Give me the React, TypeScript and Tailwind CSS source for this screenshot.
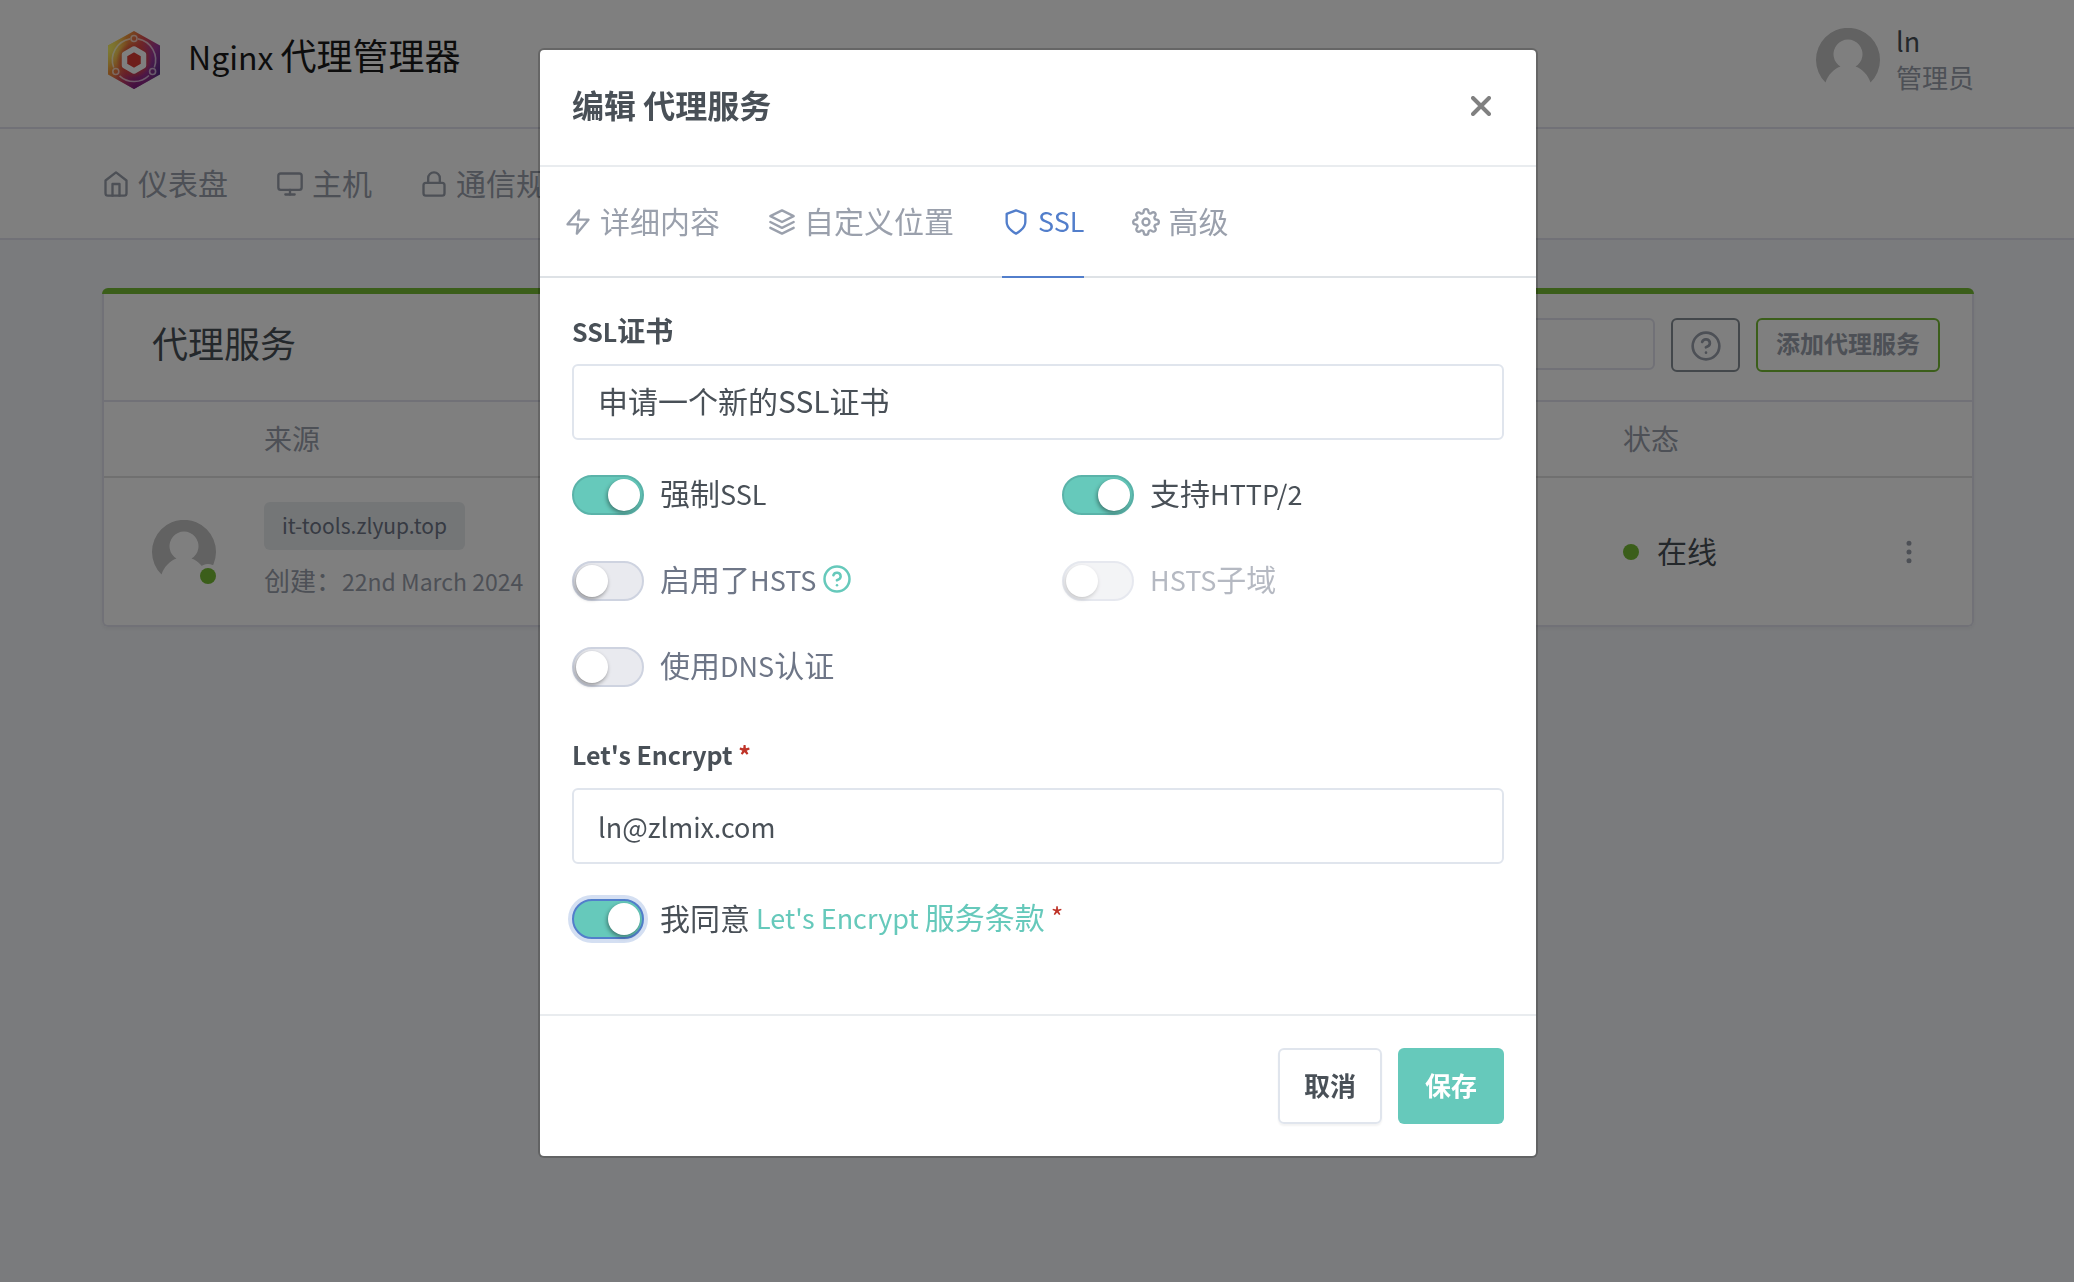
import React, { useState } from 'react';
import {
  FiHelpCircle,
  FiHome,
  FiLayers,
  FiLock,
  FiMonitor,
  FiMoreVertical,
  FiSettings,
  FiShield,
  FiZap,
} from 'react-icons/fi';
import { IconType } from 'react-icons';

const navItems: { label: string; icon: IconType }[] = [
  { label: '仪表盘', icon: FiHome },
  { label: '主机', icon: FiMonitor },
  { label: '通信规则', icon: FiLock },
];

// latin runs are set a step smaller than the chinese around them
const tabs: { id: string; label: React.ReactNode; icon: IconType }[] = [
  { id: 'details', label: '详细内容', icon: FiZap },
  { id: 'locations', label: '自定义位置', icon: FiLayers },
  { id: 'ssl', label: <span className="text-[27px]">SSL</span>, icon: FiShield },
  { id: 'advanced', label: '高级', icon: FiSettings },
];

const Logo = () => (
  <svg viewBox="0 0 52 58" className="h-[58px] w-[52px]" aria-hidden="true">
    <defs>
      <linearGradient id="hex" x1="0" y1="0.2" x2="1" y2="0.75">
        <stop offset="0" stopColor="#f5e04e" />
        <stop offset="0.25" stopColor="#f2923a" />
        <stop offset="0.5" stopColor="#dc4a50" />
        <stop offset="0.75" stopColor="#a0389c" />
        <stop offset="1" stopColor="#4f2a86" />
      </linearGradient>
      <radialGradient id="glow" cx="0" cy="0.3" r="0.4">
        <stop offset="0" stopColor="#fbf66a" />
        <stop offset="1" stopColor="#fbf66a" stopOpacity="0" />
      </radialGradient>
      <radialGradient id="core">
        <stop offset="0" stopColor="#e0402c" />
        <stop offset="0.6" stopColor="#dd4434" stopOpacity="0.8" />
        <stop offset="1" stopColor="#dd4434" stopOpacity="0" />
      </radialGradient>
      <radialGradient id="base" cx="0.55" cy="1" r="0.5">
        <stop offset="0" stopColor="#7a1c7e" />
        <stop offset="1" stopColor="#b02a7a" stopOpacity="0" />
      </radialGradient>
    </defs>
    <path d="M26 0 52 14.5v29L26 58 0 43.5v-29z" fill="url(#hex)" />
    <path d="M26 0 52 14.5v29L26 58 0 43.5v-29z" fill="url(#glow)" />
    <path d="M26 0 52 14.5v29L26 58 0 43.5v-29z" fill="url(#base)" />
    <circle cx="26" cy="29" r="18" fill="url(#core)" />
    <g fill="none" stroke="#fff" strokeOpacity="0.65" strokeWidth="1.6">
      <path d="M30 7.9A21.5 21.5 0 0 1 46.3 36.5" />
      <path d="M41 44.5A21.5 21.5 0 0 1 11.5 44.8" />
      <path d="M5.7 36.5A21.5 21.5 0 0 1 22 7.9" />
      <circle cx="26" cy="7.5" r="3" />
      <circle cx="7.8" cy="40.5" r="3" />
      <circle cx="44.6" cy="40.5" r="3" />
    </g>
    <path
      d="M26 18 35.5 23.5v11L26 40l-9.5-5.5v-11z"
      fill="#dc3c34"
      stroke="#fff"
      strokeWidth="5.5"
      strokeLinejoin="round"
    />
  </svg>
);

const Avatar = () => (
  <svg viewBox="0 0 64 64" className="size-16 shrink-0" role="img" aria-label="头像">
    <path
      d="M9.5 54.6A32 32 0 1 1 54.5 54.6C52 47 46.5 41 39.5 38.5A14.5 14.5 0 1 0 24.5 38.5C17.5 41 12 47 9.5 54.6z"
      fill="#c4c4c4"
    />
  </svg>
);

type ToggleProps = {
  id: string;
  label: React.ReactNode;
  defaultChecked?: boolean;
  disabled?: boolean;
  autoFocus?: boolean;
  children?: React.ReactNode;
};

const Toggle = ({ id, label, defaultChecked, disabled, autoFocus, children }: ToggleProps) => {
  const [checked, setChecked] = useState(!!defaultChecked);

  return (
    <div className={`flex h-[46px] items-center gap-4 ${disabled ? 'opacity-50' : ''}`}>
      <input
        id={id}
        type="checkbox"
        checked={checked}
        disabled={disabled}
        autoFocus={autoFocus}
        onChange={(e) => setChecked(e.target.checked)}
        className="h-10 w-18 shrink-0 appearance-none rounded-full border-2 border-[#ced3e0] bg-[#e9eaef] p-0.5 outline-none before:block before:size-8 before:rounded-full before:bg-white before:shadow-[-1px_2px_4px_rgba(0,0,0,0.4)] checked:border-[#5ab3a9] checked:bg-[#66c9bb] checked:before:ml-8 focus:border-[#527ecb] focus:ring-4 focus:ring-[#d4dff2]"
      />
      <div className={`flex items-center gap-1.5 pb-1 ${checked ? 'text-[#495057]' : 'text-[#6e7687]'}`}>
        <label htmlFor={id}>{label}</label>
        {children}
      </div>
    </div>
  );
};

const EditProxyModal = () => {
  const [activeTab, setActiveTab] = useState('ssl');

  return (
    <div className="fixed inset-0 flex items-start justify-center bg-black/50 pt-12 pr-[100px] pl-[102px]">
      <div
        role="dialog"
        aria-labelledby="modal-title"
        className="w-full max-w-[1000px] rounded-md border-2 border-black/20 bg-white bg-clip-padding"
      >
        <div className="flex h-[117px] items-center justify-between border-b-2 border-[#e9ecef] px-8 pb-1">
          <h5 id="modal-title" className="pb-1 text-[32px] font-bold">
            编辑 代理服务
          </h5>
          <button type="button" aria-label="关闭" className="flex size-[46px] items-center justify-center">
            <svg viewBox="0 0 20 20" className="size-5" stroke="#808080" strokeWidth="4" strokeLinecap="round">
              <path d="M2 2l16 16M18 2L2 18" />
            </svg>
          </button>
        </div>

        <div className="flex h-[111px] gap-12 border-b-2 border-[#dee2e6] px-6">
          {tabs.map((tab) => (
            <button
              key={tab.id}
              type="button"
              onClick={() => setActiveTab(tab.id)}
              className={`-mb-0.5 flex items-center gap-2 border-b-2 ${
                activeTab === tab.id ? 'border-[#527ecb] text-[#527ecb]' : 'border-transparent text-[#9aa0ac]'
              }`}
            >
              <tab.icon className="size-7" />
              <span className="pb-1">{tab.label}</span>
            </button>
          ))}
        </div>

        <form className="px-8 pt-8 pb-[72px]">
          <label htmlFor="certificate" className="block h-[42px] text-[28px] leading-10 font-bold">
            <span className="text-[25px]">SSL</span>证书
          </label>
          <select
            id="certificate"
            className="mt-3 block h-[76px] w-full appearance-none rounded-md border-2 border-[#e0e5ed] bg-white px-6 pb-1"
          >
            <option>申请一个新的SSL证书</option>
          </select>

          <div className="mt-8 grid grid-cols-2 gap-x-12 gap-y-10">
            <Toggle
              id="ssl-forced"
              label={
                <>
                  强制<span className="text-[27px]">SSL</span>
                </>
              }
              defaultChecked
            />
            <Toggle
              id="http2"
              label={
                <>
                  支持<span className="text-[27px]">HTTP/2</span>
                </>
              }
              defaultChecked
            />
            <Toggle
              id="hsts"
              label={
                <>
                  启用了<span className="text-[27px]">HSTS</span>
                </>
              }
            >
              <a href="#hsts" aria-label="HSTS" className="text-[#66c9bb]">
                <FiHelpCircle className="size-[30px]" />
              </a>
            </Toggle>
            <Toggle
              id="hsts-subdomains"
              label={
                <>
                  <span className="text-[27px]">HSTS</span>子域
                </>
              }
              disabled
            />
            <Toggle
              id="dns-challenge"
              label={
                <>
                  使用<span className="text-[27px]">DNS</span>认证
                </>
              }
            />
          </div>

          <label htmlFor="email" className="mt-11 block h-[42px] text-[25px] leading-10 font-bold">
            Let&apos;s Encrypt <span className="text-[#bf3328]">*</span>
          </label>
          <input
            id="email"
            type="email"
            defaultValue="ln@zlmix.com"
            className="mt-3 mb-8 block h-[76px] w-full rounded-md border-2 border-[#e0e5ed] px-6 text-[27px]"
          />

          <Toggle id="agree" label="我同意" defaultChecked autoFocus>
            <a href="#terms" className="text-[#66c9bb]">
              <span className="text-[27px]">Let&apos;s Encrypt </span>服务条款
            </a>
            <span className="text-[27px] text-[#bf3328]">*</span>
          </Toggle>
        </form>

        <div className="flex justify-end gap-4 border-t-2 border-[#e9ecef] p-8">
          <button
            type="button"
            className="h-[76px] rounded-md border-2 border-[#e0e5ed] px-6 pb-0.5 text-[26px] font-bold shadow-[0_2px_2px_rgba(0,0,0,0.05)]"
          >
            取消
          </button>
          <button
            type="button"
            className="h-[76px] rounded-md bg-[#66c9bb] px-[27px] pb-0.5 text-[26px] font-bold text-white"
          >
            保存
          </button>
        </div>
      </div>
    </div>
  );
};

export default function App() {
  return (
    <div className="min-h-screen bg-[#f5f7fb] font-['Noto_Sans_CJK_SC',sans-serif] text-[30px] leading-[46px] text-[#495057]">
      <header className="flex h-[129px] items-center justify-between border-b-2 border-[#e2e3ee] bg-white pr-[100px] pb-2 pl-[102px]">
        <a href="#home" className="flex items-center gap-7 pl-1.5 text-[36px] text-[#1a1a1a]">
          <Logo />
          <span className="pb-2.5">
            <span className="text-[32px]">Nginx </span>代理管理器
          </span>
        </a>
        <a href="#user" className="flex items-center gap-4">
          <Avatar />
          <span className="pb-0.5">
            <span className="block text-[27px] leading-9">ln</span>
            <span className="block text-[26px] leading-9 text-[#9aa0ac]">管理员</span>
          </span>
        </a>
      </header>

      <nav className="flex h-[111px] items-center gap-12 border-b-2 border-[#e2e3ee] bg-white pr-[100px] pl-[102px] text-[#9aa0ac]">
        {navItems.map((item) => (
          <a key={item.label} href="#nav" className="flex items-center gap-2 whitespace-nowrap">
            <item.icon className="size-7" />
            <span className="pb-1">{item.label}</span>
          </a>
        ))}
      </nav>

      <main className="pt-12 pr-[100px] pl-[102px]">
        <div className="overflow-hidden rounded-md shadow-[0_2px_4px_rgba(0,0,0,0.05)]">
          <div className="h-1.5 bg-[#76bc34]" />
          <div className="rounded-b-md border-2 border-t-0 border-[#e2e3ee] bg-white">
            <div className="flex h-[108px] items-center justify-between border-b-2 border-[#e2e3ee] pr-8 pb-1 pl-12">
              <h3 className="pb-1.5 text-[36px]">代理服务</h3>
              <div className="flex gap-4">
                <input
                  type="text"
                  aria-label="搜索"
                  className="h-[52px] w-[360px] rounded-md border-2 border-[#e2e3ee] px-4"
                />
                <button
                  type="button"
                  aria-label="帮助"
                  className="flex h-[54px] w-[69px] items-center justify-center rounded-md border-2 border-[#868e96] pt-0.5 text-[#9aa0ac]"
                >
                  <FiHelpCircle className="size-8" />
                </button>
                <button
                  type="button"
                  className="h-[54px] rounded-md border-2 border-[#76bc34] px-[18px] pb-1 text-[24px] font-bold text-[#9aa0ac]"
                >
                  添加代理服务
                </button>
              </div>
            </div>

            <table className="w-full table-fixed text-left">
              <thead>
                <tr className="h-[75px] border-b-2 border-[#e0e0e0] text-[28px] text-[#9aa0ac]">
                  <td className="w-40" />
                  <th className="pb-0.5 font-normal">来源</th>
                  <th className="w-[229px] pb-0.5 font-normal">状态</th>
                  <td className="w-[120px]" />
                </tr>
              </thead>
              <tbody>
                <tr className="h-[148px]">
                  <td className="pl-12">
                    <div className="relative size-16">
                      <Avatar />
                      <span className="absolute right-0 bottom-0 size-4 rounded-full bg-[#76bc34] ring-4 ring-white" />
                    </div>
                  </td>
                  <td>
                    <span className="block h-12 w-fit rounded-md bg-[#e9ecef] px-[18px] text-[21px] leading-[46px] text-[#6e7687]">
                      it-tools.zlyup.top
                    </span>
                    <span className="block pt-2.5 text-[26px] leading-10 text-[#9aa0ac]">
                      创建：<span className="text-[23px]">22nd March 2024</span>
                    </span>
                  </td>
                  <td>
                    <div className="flex items-center gap-4">
                      <span className="size-4 rounded-full bg-[#76bc34]" />
                      <span className="pb-1 pl-0.5">在线</span>
                    </div>
                  </td>
                  <td className="pr-12">
                    <button type="button" aria-label="更多" className="ml-auto block text-[#9aa0ac]">
                      <FiMoreVertical className="size-[30px]" />
                    </button>
                  </td>
                </tr>
              </tbody>
            </table>
          </div>
        </div>
      </main>

      <EditProxyModal />
    </div>
  );
}
